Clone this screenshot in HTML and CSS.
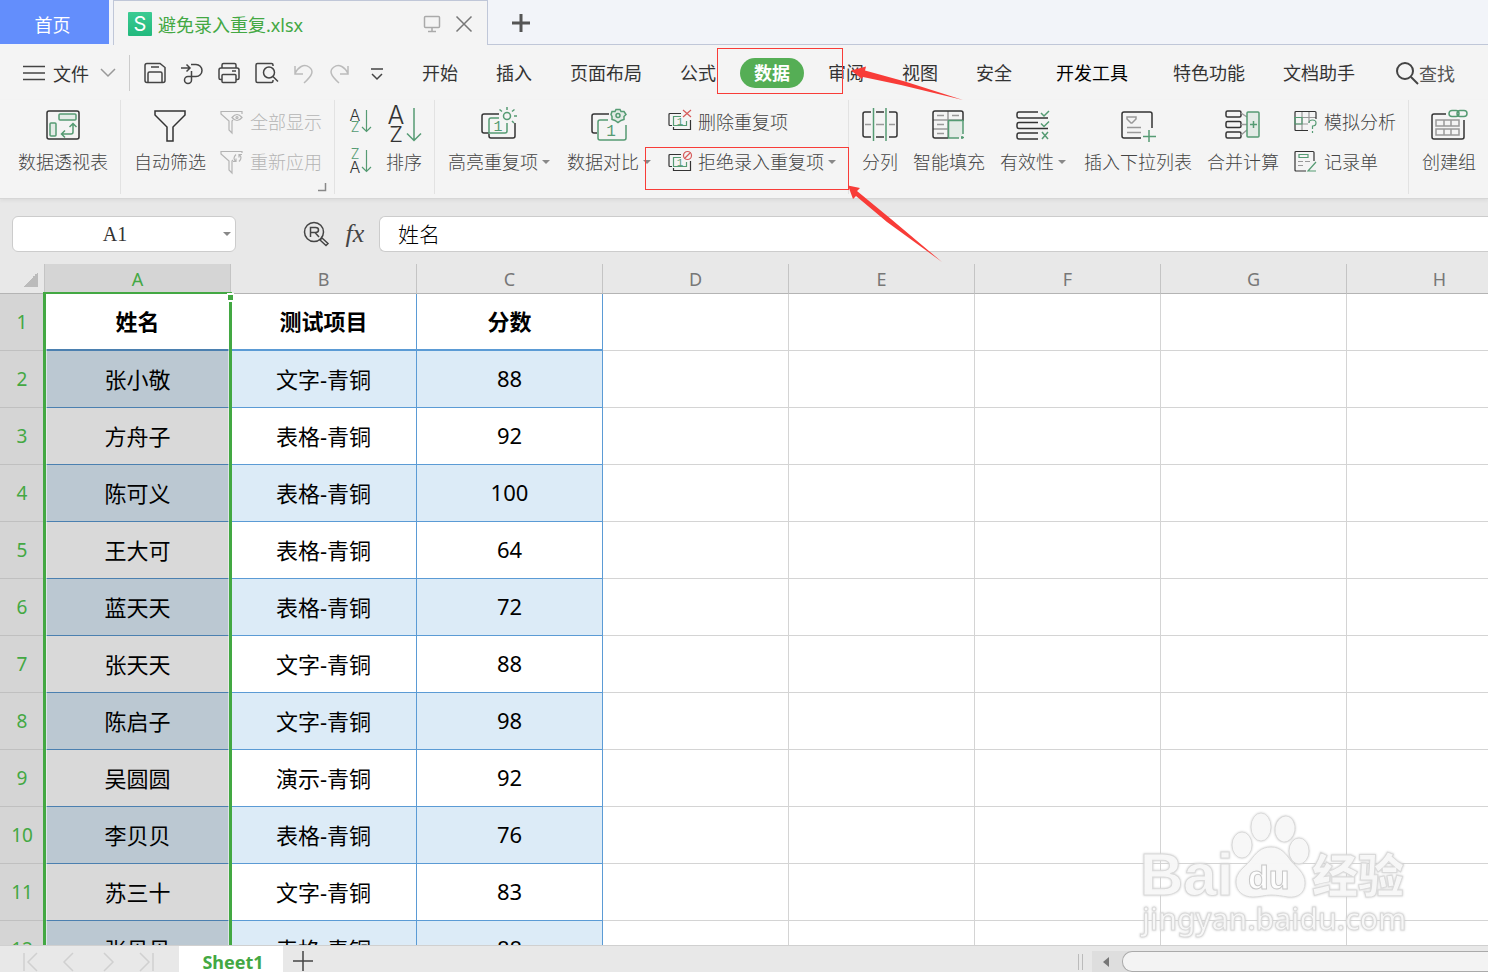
FILE: index.html
```html
<!DOCTYPE html>
<html lang="zh-CN">
<head>
	<meta charset="UTF-8">
	<title>避免录入重复.xlsx</title>
	<meta name="viewport" content="width=device-width, initial-scale=1">
	<link rel="stylesheet" href="styles.css">
</head>
<body>
	<header class="tabs">
		<button class="home">首页</button>
		<div class="doc">
			<span class="logo">S</span>
			<span class="doc_name">避免录入重复.xlsx</span>
			<svg class="monitor" width="18" height="18" viewBox="0 0 18 18"><rect x="1.500" y="1.500" width="15" height="11" rx="1"/><path d="M9 12.500v4M5 16.500h8"/></svg>
			<button class="close" aria-label="关闭"><svg width="18" height="18" viewBox="0 0 18 18"><path d="M1.500 1.500l15 15M16.500 1.500l-15 15"/></svg></button>
		</div>
		<div class="tabs_rest">
			<button class="add" aria-label="新建"><svg width="20" height="20" viewBox="0 0 20 20"><path d="M10 1v18M1 10h18"/></svg></button>
		</div>
	</header>

	<div class="menu">
		<button class="file">
			<svg width="22" height="20" viewBox="0 0 22 20"><path d="M0 3.500h22M0 10h22M0 16.500h22"/></svg>
			文件
			<svg class="pale" width="16" height="16" viewBox="0 0 16 16"><path d="M1 4l7 7 7-7"/></svg>
		</button>
		<div class="quick">
			<button aria-label="保存"><svg width="24" height="24" viewBox="0 0 24 24"><path d="M4 2.500h13l5 4v13q0 2-2 2H4q-2 0-2-2v-15q0-2 2-2z"/><path d="M5 21.500v-9q0-1.500 1.500-1.500h11q1.500 0 1.500 1.500v9M8 6h8"/></svg></button>
			<button aria-label="输出"><svg width="24" height="24" viewBox="0 0 24 24"><path d="M1 7h9M6.500 3.500L10 7l-3.500 3.500M11 3.500h5a6 6 0 0 1 0 12H8a3.500 3.500 0 1 0 3.500 3.500V10"/></svg></button>
			<button aria-label="打印"><svg width="24" height="24" viewBox="0 0 24 24"><path d="M5 7V4q0-1.500 1.500-1.500h11Q19 2.500 19 4v3M5 18.500H3.500q-1.500 0-1.500-1.500V9q0-2 2-2h16q2 0 2 2v8q0 1.500-1.500 1.500H19M15 10h4"/><rect x="5" y="13.500" width="14" height="8" rx="1"/></svg></button>
			<button aria-label="打印预览"><svg width="24" height="24" viewBox="0 0 24 24"><path d="M19 5V4q0-1.500-1.500-1.500h-14Q2 2.500 2 4v16q0 1.500 1.500 1.500h14Q19 21.500 19 20v-1"/><circle cx="15" cy="11.500" r="5.500"/><path d="M19 15.500l5 5"/></svg></button>
			<button class="pale" aria-label="撤消"><svg width="24" height="24" viewBox="0 0 24 24"><path d="M4 5v8h8M4 12.500C7 6 13 2.500 18 6s4 8-5 16"/></svg></button>
			<button class="pale" aria-label="恢复"><svg width="24" height="24" viewBox="0 0 24 24"><path d="M20 5v8h-8M20 12.500C17 6 11 2.500 6 6s-4 8 5 16"/></svg></button>
			<button aria-label="更多"><svg width="24" height="24" viewBox="0 0 24 24"><path d="M6 8h12M7 13l5 5 5-5"/></svg></button>
		</div>
		<nav class="nav">
			<button>开始</button>
			<button>插入</button>
			<button>页面布局</button>
			<button>公式</button>
			<button class="current">数据</button>
			<button>审阅</button>
			<button>视图</button>
			<button>安全</button>
			<button class="dev">开发工具</button>
			<button>特色功能</button>
			<button>文档助手</button>
		</nav>
		<button class="search"><svg width="24" height="24" viewBox="0 0 24 24"><circle cx="10" cy="10" r="8"/><path d="M16 16l7 7"/></svg>查找</button>
	</div>

	<div class="ribbon">
		<div class="group first">
			<button class="big">
				<svg class="ico" width="36" height="36" viewBox="0 0 36 36"><rect x="2" y="5" width="32" height="28" rx="2"/><g class="g"><rect class="f" x="14" y="8" width="17" height="6" rx="1"/><rect class="f" x="5" y="17" width="6" height="13" rx="1"/><path d="M17 28h9q2 0 2-2v-8M20 24.500L16.500 28l3.500 3.500M24.500 21l3.500-3.500 3.500 3.500"/></g></svg>
				<span>数据透视表</span>
			</button>
		</div>
		<div class="group">
			<button class="big">
				<svg class="ico" width="36" height="36" viewBox="0 0 36 36"><path d="M3 5h30v4L21 21v14h-6V21L3 9z"/></svg>
				<span>自动筛选</span>
			</button>
			<div class="stack">
				<button class="small off" disabled><svg class="ico" width="24" height="24" viewBox="0 0 24 24"><path d="M22 4V1.500H1V4l8 7v9l3 3V11l1-1"/><path d="M12 7.500q5-6 10 0q-5 6-10 0z"/><circle cx="17" cy="7.500" r="1"/></svg><span>全部显示</span></button>
				<button class="small off" disabled><svg class="ico" width="24" height="24" viewBox="0 0 24 24"><path d="M22 3V1.500H1V4l8 7v9l3 3V11l1-1"/><path d="M16 4.500q-4 4 0 7M13 11.500h3v-3M19 11.500q4-4 0-7M22 4.500h-3v3"/></svg><span>重新应用</span></button>
			</div>
			<svg class="corner" width="9" height="9" viewBox="0 0 9 9"><path d="M7.500 0v7.500H0"/></svg>
		</div>
		<div class="group">
			<div class="stack">
				<button class="small" aria-label="升序"><svg class="ico" width="24" height="24" viewBox="0 0 24 24"><text x="7" y="11" font-size="16">A</text><text class="gt" x="7" y="22" font-size="14">Z</text><path class="g" d="M18.500 0v21.500M14 17l4.500 4.500L23 17"/></svg></button>
				<button class="small" aria-label="降序"><svg class="ico" width="24" height="24" viewBox="0 0 24 24"><text class="gt" x="7" y="9" font-size="14">Z</text><text x="7" y="23" font-size="16">A</text><path class="g" d="M18.500 0v21.500M14 17l4.500 4.500L23 17"/></svg></button>
			</div>
			<button class="big">
				<svg class="ico" width="36" height="36" viewBox="0 0 36 36"><text x="10" y="18" font-size="25">A</text><text x="10" y="36" font-size="22">Z</text><path class="g" d="M28 2v32M21 27.500l7 7 7-7"/></svg>
				<span>排序</span>
			</button>
		</div>
		<div class="group">
			<button class="big drop">
				<svg class="ico" width="36" height="36" viewBox="0 0 36 36"><path d="M18 8H3Q1 8 1 10v15q0 2 2 2h5M8 28v2q0 2 2 2h22q2 0 2-2V17"/><g class="g"><path d="M18 12H10q-2 0-2 2v13h16q2 0 2-2v-8"/><circle cx="26" cy="10" r="3.500"/><path d="M26 1v3M18.500 3.500l2.500 2M33.500 3.500l-2.500 2M33 10h3M31 15l2 2"/></g><text class="one" x="17" y="25" font-size="15">1</text></svg>
				<span>高亮重复项</span>
			</button>
			<button class="big drop">
				<svg class="ico" width="36" height="36" viewBox="0 0 36 36"><path d="M18 8H3Q1 8 1 10v15q0 2 2 2h3"/><g class="g"><path d="M17 14H9q-2 0-2 2v16q0 2 2 2h24q2 0 2-2V19"/><path class="f" d="M25 3.500h4l1 2 3 0 2 3-2 2 0 3-3 1-3 2-3-2-3-1 0-3-1-2 1-3 3 0z"/><circle cx="27" cy="9.500" r="2"/></g><text class="one" x="20" y="30" font-size="16">1</text></svg>
				<span>数据对比</span>
			</button>
			<div class="stack">
				<button class="small"><svg class="ico" width="24" height="24" viewBox="0 0 24 24"><path d="M13 3.500H2q-1 0-1 1v10q0 1 1 1h2M5.500 17v2.500h17V10"/><path class="g" d="M13 6.500H5.500v9h13V11"/><text class="one" x="12" y="15" font-size="11">1</text><path class="r" d="M15 0l8 7M23 0l-8 7"/></svg><span>删除重复项</span></button>
				<button class="small drop"><svg class="ico" width="24" height="24" viewBox="0 0 24 24"><path d="M13 4.500H2q-1 0-1 1v10q0 1 1 1h2M5.500 18v2.500h17V11"/><path class="g" d="M13 7.500H5.500v9h13V12"/><text class="one" x="12" y="16" font-size="11">1</text><g class="r"><circle cx="19.500" cy="5.500" r="4"/><path d="M16.500 8.500l6-6"/></g></svg><span>拒绝录入重复项</span></button>
			</div>
		</div>
		<div class="group wide">
			<button class="big">
				<svg class="ico" width="36" height="36" viewBox="0 0 36 36"><path d="M9 6H3Q1 6 1 8v21q0 2 2 2h6M14 6h8M14 31h8M27 6h6q2 0 2 2v21q0 2-2 2h-6"/><path class="s" d="M3 18.500h6M14 18.500h8M27 18.500h6"/><path class="g" d="M11.500 2v33M24 2v33"/></svg>
				<span>分列</span>
			</button>
			<button class="big">
				<svg class="ico" width="36" height="36" viewBox="0 0 36 36"><path class="s" d="M17 5v27M2 14h30M2 23h15M6 9.500h7M21 9.500h7M6 18.500h7M6 27.500h7"/><path class="fill" d="M17.500 14.500H32V28l-4 4H17.500z"/><path d="M17 32H4q-2 0-2-2V7q0-2 2-2h26q2 0 2 2v8"/><path class="g" d="M32 28V14.500H17.500V32H28M31 30v3M30 31.500h3"/></svg>
				<span>智能填充</span>
			</button>
			<button class="big drop">
				<svg class="ico" width="36" height="36" viewBox="0 0 36 36"><path d="M23 6H4Q2 6 2 8v2q0 2 2 2h29M23 16.500H4q-2 0-2 2v2q0 2 2 2h29M23 27H4q-2 0-2 2v2q0 2 2 2h19"/><path class="g" d="M26 7l3 3 5-5M26 17.500l3 3 5-5M27 26l6 7M33 26l-6 7"/></svg>
				<span>有效性</span>
			</button>
			<button class="big">
				<svg class="ico" width="36" height="36" viewBox="0 0 36 36"><path d="M21 32H4q-2 0-2-2V8q0-2 2-2h26q2 0 2 2v14"/><path class="s" d="M7 11h9v2l-4 4h-1l-4-4zM7 21.500h14M7 26.500h14"/><path class="g" d="M29 24v12M23 30.500h13"/></svg>
				<span>插入下拉列表</span>
			</button>
			<button class="big">
				<svg class="ico" width="36" height="36" viewBox="0 0 36 36"><rect x="1" y="5" width="15" height="6" rx="1.500"/><rect x="1" y="15.500" width="15" height="6" rx="1.500"/><rect x="1" y="26" width="15" height="6" rx="1.500"/><path class="s" d="M16 7l6 4M16 18.500h6M16 29l6-5"/><g class="g"><rect class="f" x="22" y="6" width="12" height="25" rx="1"/><path d="M25 18.500h7M28.500 15v7"/></g></svg>
				<span>合并计算</span>
			</button>
			<div class="stack">
				<button class="small"><svg class="ico" width="24" height="24" viewBox="0 0 24 24"><path class="s" d="M8 1v19M15 1v12M1 7.500h21M1 14h13"/><path d="M14 20.500H2q-1 0-1-1V2.500q0-1 1-1h19q1 0 1 1V9"/><path class="g" d="M1 7.500h7V14H1zM15 13q0-3 3.500-3t3.500 3-3.500 3v3M18.500 21v2"/></svg><span>模拟分析</span></button>
				<button class="small"><svg class="ico" width="24" height="24" viewBox="0 0 24 24"><path d="M12 21H2q-1 0-1-1V2.500q0-1 1-1h17q1 0 1 1V11"/><path class="s" d="M4 11.500h5M4 15.500h5M11 11.500h5"/><path class="g" d="M5 4.500h9v3H5zM22 12l-8 9h8"/></svg><span>记录单</span></button>
			</div>
		</div>
		<div class="group last">
			<button class="big">
				<svg class="ico" width="36" height="36" viewBox="0 0 36 36"><path d="M15 8H3Q1 8 1 10v21q0 2 2 2h28q2 0 2-2V14"/><path class="s" d="M5 14h23v6H5zM13 14v6M20 14v6M5 23h23v6H5zM13 23v6M20 23v6"/><g class="g"><rect x="18" y="4.500" width="10" height="6" rx="3"/><rect x="26" y="4.500" width="10" height="6" rx="3"/></g></svg>
				<span>创建组</span>
			</button>
		</div>
	</div>

	<div class="formula">
		<div class="namebox"><input type="text" value="A1" aria-label="名称框"></div>
		<button class="find" aria-label="查找函数"><svg width="26" height="26" viewBox="0 0 26 26"><circle cx="11" cy="11" r="9.500"/><path d="M7.500 16V6.500h5q3 0 3 2.500t-3 2.500h-5M12 11.500l4 4.500M17 19l2-2 6 5.500-2 2z"/></svg></button>
		<button class="fx" aria-label="插入函数">fx</button>
		<input class="value" type="text" value="姓名" aria-label="编辑栏">
	</div>

	<main class="sheet">
		<table class="grid">
			<thead>
				<tr><th class="all"></th><th class="sel">A</th><th>B</th><th>C</th><th>D</th><th>E</th><th>F</th><th>G</th><th>H</th></tr>
			</thead>
			<tbody>
				<tr class="head"><th>1</th><td>姓名</td><td>测试项目</td><td>分数</td><td></td><td></td><td></td><td></td><td></td></tr>
				<tr><th>2</th><td>张小敬</td><td>文字-青铜</td><td>88</td><td></td><td></td><td></td><td></td><td></td></tr>
				<tr><th>3</th><td>方舟子</td><td>表格-青铜</td><td>92</td><td></td><td></td><td></td><td></td><td></td></tr>
				<tr><th>4</th><td>陈可义</td><td>表格-青铜</td><td>100</td><td></td><td></td><td></td><td></td><td></td></tr>
				<tr><th>5</th><td>王大可</td><td>表格-青铜</td><td>64</td><td></td><td></td><td></td><td></td><td></td></tr>
				<tr><th>6</th><td>蓝天天</td><td>表格-青铜</td><td>72</td><td></td><td></td><td></td><td></td><td></td></tr>
				<tr><th>7</th><td>张天天</td><td>文字-青铜</td><td>88</td><td></td><td></td><td></td><td></td><td></td></tr>
				<tr><th>8</th><td>陈启子</td><td>文字-青铜</td><td>98</td><td></td><td></td><td></td><td></td><td></td></tr>
				<tr><th>9</th><td>吴圆圆</td><td>演示-青铜</td><td>92</td><td></td><td></td><td></td><td></td><td></td></tr>
				<tr><th>10</th><td>李贝贝</td><td>表格-青铜</td><td>76</td><td></td><td></td><td></td><td></td><td></td></tr>
				<tr><th>11</th><td>苏三十</td><td>文字-青铜</td><td>83</td><td></td><td></td><td></td><td></td><td></td></tr>
				<tr><th>12</th><td>张贝贝</td><td>表格-青铜</td><td>88</td><td></td><td></td><td></td><td></td><td></td></tr>
			</tbody>
		</table>
		<div class="selection"><i></i></div>
		<svg class="mark" width="270" height="136" viewBox="0 0 270 136">
			<text class="bai" x="1" y="86" font-size="60">Bai</text>
			<ellipse cx="103" cy="36" rx="10" ry="13"/>
			<ellipse cx="122" cy="18" rx="10" ry="14"/>
			<ellipse cx="146" cy="20" rx="10" ry="13" transform="rotate(8 146 20)"/>
			<ellipse cx="160" cy="42" rx="10" ry="13"/>
			<path d="M132 38c10 0 15 7 20 14 6 7 14 12 14 22 0 10-7 15-17 14-6-1-11-2-17-2s-11 2-18 2c-10 0-17-6-17-15 0-10 8-14 14-21 6-8 11-14 21-14z"/>
			<text class="du" x="109" y="80" font-size="34">du</text>
			<text class="jy" x="173" y="83" font-size="46">经验</text>
			<text class="url" x="3" y="121" font-size="30">jingyan.baidu.com</text>
		</svg>
	</main>

	<footer class="bottom">
		<div class="pages">
			<button aria-label="第一张"><svg width="18" height="20" viewBox="0 0 18 20"><path d="M2 1v18M15 1L6 10l9 9"/></svg></button>
			<button aria-label="上一张"><svg width="18" height="20" viewBox="0 0 18 20"><path d="M12 1L3 10l9 9"/></svg></button>
			<button aria-label="下一张"><svg width="18" height="20" viewBox="0 0 18 20"><path d="M4 1l9 9-9 9"/></svg></button>
			<button aria-label="最后一张"><svg width="18" height="20" viewBox="0 0 18 20"><path d="M1 1l9 9-9 9M14 1v18"/></svg></button>
		</div>
		<button class="sheet_tab">Sheet1</button>
		<button class="sheet_add" aria-label="新建工作表"><svg width="20" height="20" viewBox="0 0 20 20"><path d="M10 0v20M0 10h20"/></svg></button>
		<div class="split"></div>
		<div class="scroll">
			<button aria-label="向左滚动"><svg width="6" height="10" viewBox="0 0 6 10"><path d="M6 0v10L0 5z"/></svg></button>
			<div class="thumb"></div>
		</div>
	</footer>

	<div class="note note_tab"></div>
	<div class="note note_reject"></div>
	<svg class="arrows" width="970" height="270" viewBox="0 0 970 270"><path d="M851 70.500l15-4-1 4 40 11 58 18.500-62-15-38-8-1 2z"/><path d="M848 185.500l12 2.500-3 3 34 28 51 43-55-40-31-26-3 3z"/></svg>
</body>
</html>
```
FILE: styles.css
```css
html{
	font-size: 18px;
	font-family: "Noto Sans", "Noto Sans CJK SC", sans-serif;
}
body{
	margin: 0;
	height: 100vh;
	display: flex;
	flex-flow: column nowrap;
	position: relative;
	overflow: hidden;
	background: #e8e8e8;
	color: #333;
}
button, input {
	font: inherit;
	color: inherit;
	border: 0;
	padding: 0;
	margin: 0;
	background: none;
	white-space: nowrap;
}
svg {
	display: block;
	flex: none;
	overflow: visible;
	fill: none;
	stroke: #444;
	stroke-width: 1.5;
}

/* document tabs */
.tabs {
	display: flex;
	flex: none;
	height: 45px;
	background: #f2f4f9;
}
.home {
	width: 109px;
	height: 44px;
	padding-right: 4px;
	padding-top: 4px;
	background: #638efc;
	color: white;
}
.doc {
	box-sizing: border-box;
	width: 375px;
	margin-left: 4px;
	padding: 2px 14px 0 14px;
	border: 1px solid #c0c7d8;
	border-bottom: 0;
	background: #f4f4f4;
	display: flex;
	align-items: center;
}
.logo {
	width: 24px;
	height: 24px;
	line-height: 24px;
	text-align: center;
	background: linear-gradient(#3ccb93, #22b97d);
	color: white;
	font-family: Inter, sans-serif;
	font-size: 20px;
	border-radius: 1px;
}
.doc_name {
	flex: 1;
	margin-left: 6px;
	color: #43a843;
}
.monitor {
	stroke: #aaa;
	margin-right: 14px;
}
.close svg {
	stroke: #777;
}
.tabs_rest {
	flex: 1;
	border-bottom: 1px solid #c0c7d8;
	display: flex;
	align-items: center;
	padding: 2px 0 0 23px;
}
.add svg {
	stroke: #555;
	stroke-width: 3;
}

/* menu */
.menu {
	flex: none;
	height: 55px;
	display: flex;
	align-items: center;
	background: #f4f4f4;
	padding-left: 23px;
}
.file {
	display: flex;
	align-items: center;
	gap: 8px;
	height: 36px;
	padding-right: 13px;
	border-right: 1px solid #ccc;
}
.file .pale {
	margin-left: 3px;
}
.pale, .pale svg {
	stroke: #999;
}
.quick .pale svg {
	stroke: #bbb;
}
.quick {
	display: flex;
	gap: 13px;
	padding-left: 13px;
}
.nav {
	display: flex;
	align-items: center;
	margin-left: 14px;
}
.nav button {
	padding: 0 19px;
	height: 30px;
	line-height: 30px;
}
.nav .current {
	padding: 0 14px;
	margin: 0 5px;
	border-radius: 15px;
	background: #55ae55;
	color: white;
	font-weight: 700;
}
.nav .dev {
	margin: 0 7px 0 6px;
	color: #000;
}
.search {
	display: flex;
	align-items: center;
	margin-left: 21px;
	color: #555;
}
.search svg {
	stroke-width: 2;
}

/* ribbon */
.ribbon {
	flex: none;
	height: 98px;
	display: flex;
	background: #f4f4f4;
	border-bottom: 1px solid #d6d6d6;
	box-shadow: 0 2px 3px #ddd;
	color: #444;
	font-weight: 300;
}
.group {
	height: 94px;
	display: flex;
	gap: 14px;
	padding: 0 12px 0 13px;
	border-right: 1px solid #e2e2e2;
	position: relative;
	flex: none;
}
.group.first {
	padding-left: 18px;
}
.group.wide {
	gap: 15px;
}
.group.last {
	border-right: 0;
}
.big {
	height: 74px;
	padding-top: 6px;
	display: flex;
	flex-flow: column nowrap;
	align-items: center;
	gap: 8px;
	line-height: 24px;
}
.stack {
	display: flex;
	flex-flow: column nowrap;
	align-items: flex-start;
	gap: 16px;
	padding-top: 10px;
}
.small {
	height: 24px;
	line-height: 24px;
	display: flex;
	align-items: center;
	gap: 6px;
}
.big.drop {
	margin-right: 3px;
}
.drop span::after {
	content: "";
	display: inline-block;
	margin-left: 4px;
	vertical-align: 5px;
	border: 4px solid transparent;
	border-top-color: #888;
	border-bottom: 0;
}
.off {
	color: #b4b4b4;
}
.ico {
	stroke: #333;
}
.small .ico {
	stroke-width: 1.2;
}
.off .ico {
	stroke: #b4b4b4;
}
.ico .g {
	stroke: #559b73;
}
.ico .f {
	fill: #e3ebe6;
}
.ico .fill {
	fill: #e3ebe6;
	stroke: none;
}
.ico .s {
	stroke: #999;
}
.ico .r {
	stroke: #d65a5a;
}
.ico text {
	fill: #333;
	stroke: none;
	text-anchor: middle;
	font-family: Inter, sans-serif;
	font-weight: 300;
}
.ico .gt {
	fill: #559b73;
}
.ico .one {
	fill: #559b73;
	font-family: "Liberation Mono", monospace;
}
.corner {
	position: absolute;
	right: 7px;
	bottom: 2px;
	stroke: #888;
}

/* formula bar */
.formula {
	flex: none;
	display: flex;
	align-items: center;
	height: 35px;
	padding: 17px 0 13px 12px;
}
.namebox {
	box-sizing: border-box;
	width: 224px;
	height: 36px;
	padding-right: 4px;
	border: 1px solid #ccc;
	border-radius: 6px;
	background: white;
	display: flex;
	align-items: center;
}
.namebox::after {
	content: "";
	border: 4px solid transparent;
	border-top-color: #888;
	border-bottom: 0;
}
.namebox input {
	flex: 1;
	min-width: 0;
	padding: 2px 6px 0 0;
	text-align: center;
	font-family: "Liberation Serif", serif;
	font-size: 20px;
}
.find {
	margin-left: 67px;
}
.fx {
	width: 26px;
	margin: 0 11px 0 13px;
	font: italic 26px "Liberation Serif", serif;
	color: #444;
}
.value {
	flex: 1;
	box-sizing: border-box;
	height: 36px;
	padding: 0 0 2px 18px;
	border: 1px solid #ccc;
	border-right: 0;
	border-radius: 6px 0 0 6px;
	background: white;
	color: #000;
	font-size: 21px;
	font-weight: 300;
}

/* sheet */
.sheet {
	flex: 1;
	min-height: 0;
	position: relative;
	overflow: hidden;
}
.grid {
	table-layout: fixed;
	width: 1533px;
	border-spacing: 0;
	background: white;
	text-align: center;
}
.grid th, .grid td {
	box-sizing: border-box;
	width: 186px;
	padding: 0;
	border: 0 solid #d4d4d4;
	border-width: 0 1px 1px 0;
}
.grid thead th {
	height: 30px;
	background: #e8e8e8;
	border-color: #c4c4c4;
	border-bottom-color: #b4b4b4;
	color: #777;
	font-weight: 400;
}
.grid thead .sel {
	background: #d5d5d5;
	color: #43a843;
}
.grid thead .all {
	width: 45px;
	background: linear-gradient(135deg, transparent 50%, #bbb 50%) 23px 8px / 15px 15px no-repeat #e8e8e8;
}
.grid tbody th {
	width: 45px;
	height: 57px;
	background: #d5d5d5;
	border-bottom-color: #c0c0c0;
	color: #43a843;
	font-size: 19px;
	font-weight: 400;
}
.grid td {
	height: 57px;
	padding-bottom: 3px;
	font-size: 22px;
	color: #000;
}
.grid td:nth-child(-n+4) {
	border-color: #5b9bd5;
}
.grid tr:nth-child(even) td:nth-child(-n+4) {
	background: #dcebf7;
}
.grid tbody td:nth-child(2) {
	background: #d9d9d9;
	border-bottom-color: #4b80b0;
}
.grid tr:nth-child(even) td:nth-child(2) {
	background: #bbc8d2;
}
.grid .head td {
	font-weight: 700;
}
.grid .head td:nth-child(2) {
	background: white;
}
.grid .head td:nth-child(-n+4) {
	border-bottom-width: 2px;
}
.selection {
	position: absolute;
	left: 43px;
	top: 28px;
	bottom: -4px;
	width: 189px;
	box-sizing: border-box;
	border: 3px solid #43a843;
	border-top-width: 2px;
	box-shadow: inset 0 0 0 1px rgba(255, 255, 255, .5);
}
.selection i {
	position: absolute;
	right: -5px;
	top: -1px;
	width: 5px;
	height: 5px;
	border: 1px solid white;
	border-width: 2px 1px;
	background: #43a843;
}

/* watermark */
.mark {
	position: absolute;
	right: 79px;
	bottom: 0;
	fill: rgba(255, 255, 255, .8);
	stroke: #dadada;
	stroke-width: 1;
	filter: drop-shadow(0 0 1px #ccc);
}
.bai, .du {
	font-family: "Liberation Sans", sans-serif;
	font-weight: 700;
}
.du {
	stroke: #c8c8c8;
}
.jy {
	font-family: "Noto Sans CJK SC", sans-serif;
	font-weight: 900;
}
.url {
	font-family: "Noto Sans", sans-serif;
	font-weight: 500;
}

/* sheet tabs */
.bottom {
	flex: none;
	box-sizing: border-box;
	height: 27px;
	display: flex;
	border-top: 1px solid #d0d0d0;
	background: #e8e8e8;
	overflow: hidden;
}
.pages {
	display: flex;
	gap: 21px;
	width: 157px;
	padding: 5px 0 0 22px;
}
.pages svg {
	stroke: #d0d0d0;
}
.sheet_tab {
	width: 104px;
	padding: 5px 0 0 4px;
	background: white;
	color: #43a843;
	font-weight: 700;
	line-height: 22px;
}
.sheet_add {
	margin-left: 10px;
	padding-top: 4px;
}
.split {
	width: 3px;
	height: 16px;
	margin: 8px 9px 0 auto;
	border: 1px solid #bbb;
	border-width: 0 1px;
}
.scroll {
	width: 396px;
	margin-top: 5px;
	background: #dedede;
	display: flex;
}
.scroll button {
	width: 30px;
	padding-left: 11px;
	flex: none;
}
.scroll svg {
	fill: #777;
	stroke: none;
}
.thumb {
	flex: 1;
	box-sizing: border-box;
	height: 21px;
	border: 1px solid #aaa;
	border-right: 0;
	border-radius: 10px 0 0 10px;
	background: #f3f3f3;
}

/* red callouts */
.note {
	position: absolute;
	box-sizing: border-box;
	border: 1px solid #f83c38;
	pointer-events: none;
}
.note_tab {
	left: 717px;
	top: 48px;
	width: 126px;
	height: 46px;
}
.note_reject {
	left: 645px;
	top: 147px;
	width: 204px;
	height: 43px;
}
.arrows {
	position: absolute;
	left: 0;
	top: 0;
	fill: #f83c38;
	stroke: none;
	pointer-events: none;
}
```
